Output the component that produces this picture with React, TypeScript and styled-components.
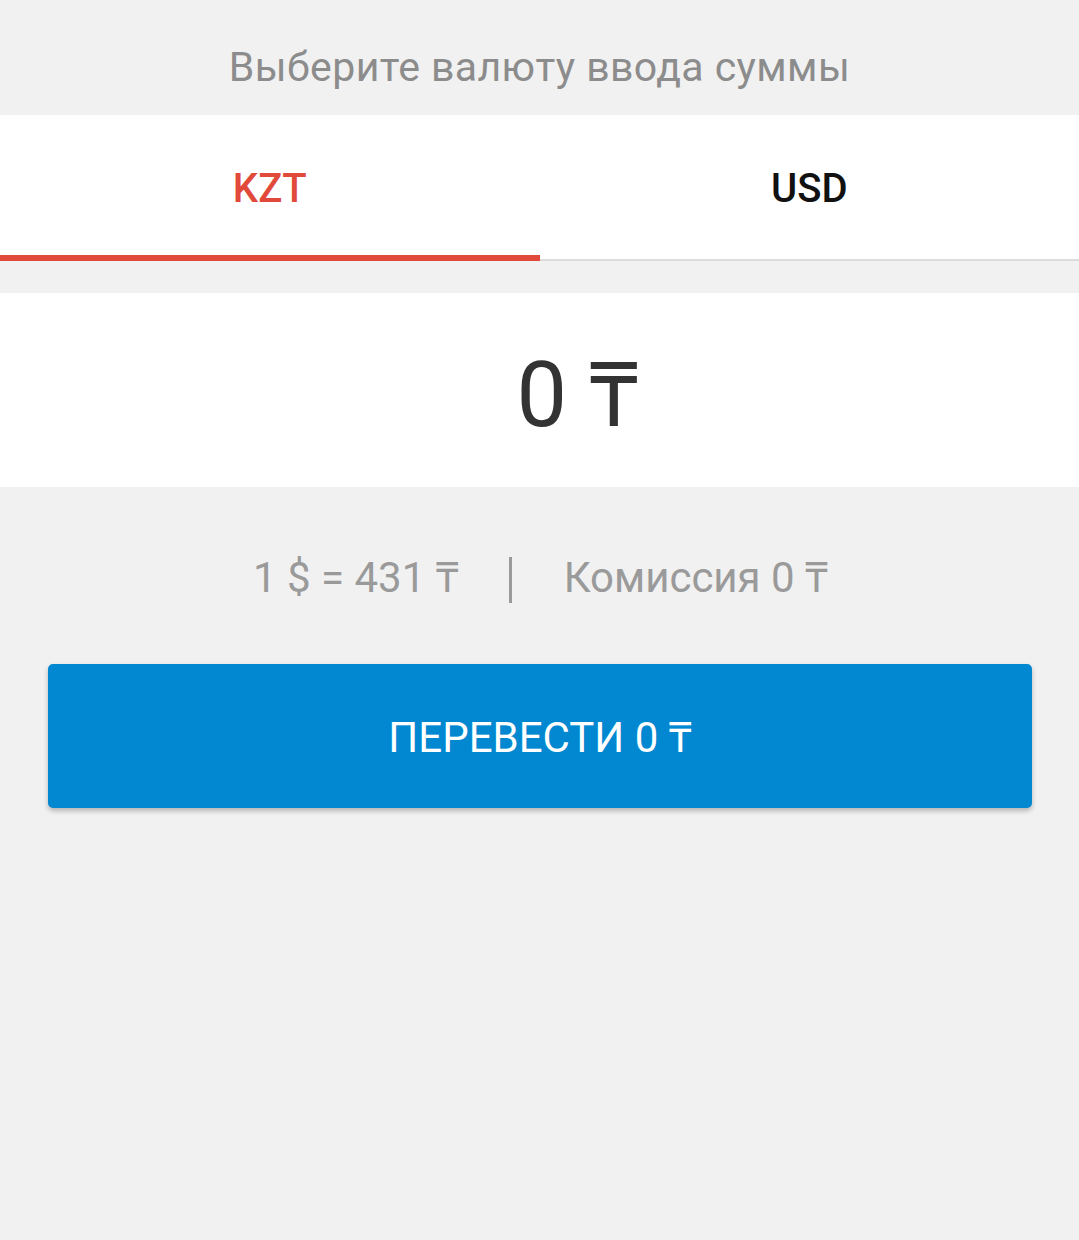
import React, { useState } from "react";
import styled, { createGlobalStyle } from "styled-components";

const Global = createGlobalStyle`
  html, body { margin: 0; padding: 0; background: #f1f1f1; }
  body { font-family: Roboto, "Noto Sans", "DejaVu Sans", sans-serif; }
`;

const Page = styled.div`
  width: 1079px;
  min-height: 1240px;
  background: #f1f1f1;
  display: flex;
  flex-direction: column;
`;

const Header = styled.div`
  height: 115px;
  display: flex;
  align-items: center;
  justify-content: center;
  color: #8c8c8c;
  font-size: 41px;
  letter-spacing: 0.4px;
  padding-top: 18px;
  box-sizing: border-box;
`;

const Tabs = styled.div`
  display: flex;
  background: #fff;
  height: 146px;
  border-bottom: 2px solid #dcdcdc;
  box-sizing: border-box;
`;

const Tab = styled.button<{ $active: boolean }>`
  flex: 1;
  border: none;
  background: transparent;
  font-family: inherit;
  font-weight: 500;
  font-size: 40px;
  color: ${(p) => (p.$active ? "#e14a3b" : "#111")};
  padding: 2px 0 0;
  position: relative;
  cursor: pointer;
  &::after {
    content: "";
    position: absolute;
    left: 0;
    right: 0;
    bottom: -2px;
    height: 6px;
    background: ${(p) => (p.$active ? "#e14a3b" : "transparent")};
  }
`;

const AmountPanel = styled.div`
  margin-top: 32px;
  height: 194px;
  background: #fff;
  display: flex;
  align-items: center;
  justify-content: center;
  padding-left: 76px;
  box-sizing: border-box;
  font-size: 90px;
  color: #333;
  padding-top: 2px;
`;

const Info = styled.div`
  height: 177px;
  display: flex;
  align-items: center;
  justify-content: center;
  color: #9a9a9a;
  font-size: 42px;
  padding-left: 2px;
`;

const Sep = styled.span`
  margin: 0 52px 0 50px;
  display: inline-block;
  width: 3px;
  height: 46px;
  background: #9a9a9a;
  transform: translateY(4px);
`;

const Button = styled.button`
  margin: 0 47px 0 48px;
  height: 144px;
  border: none;
  border-radius: 5px;
  background: #0288d1;
  color: #fff;
  font-family: inherit;
  font-size: 42px;
  box-shadow: 0 3px 5px rgba(0, 0, 0, 0.25);
  cursor: pointer;
  padding-bottom: 2px;
`;

export default function App() {
  const [cur, setCur] = useState("KZT");
  return (
    <Page>
      <Global />
      <Header>Выберите валюту ввода суммы</Header>
      <Tabs>
        <Tab $active={cur === "KZT"} onClick={() => setCur("KZT")}>KZT</Tab>
        <Tab $active={cur === "USD"} onClick={() => setCur("USD")}>USD</Tab>
      </Tabs>
      <AmountPanel>0 ₸</AmountPanel>
      <Info>
        <span>1 $ = 431 ₸</span>
        <Sep />
        <span>Комиссия 0 ₸</span>
      </Info>
      <Button>ПЕРЕВЕСТИ 0 ₸</Button>
    </Page>
  );
}
